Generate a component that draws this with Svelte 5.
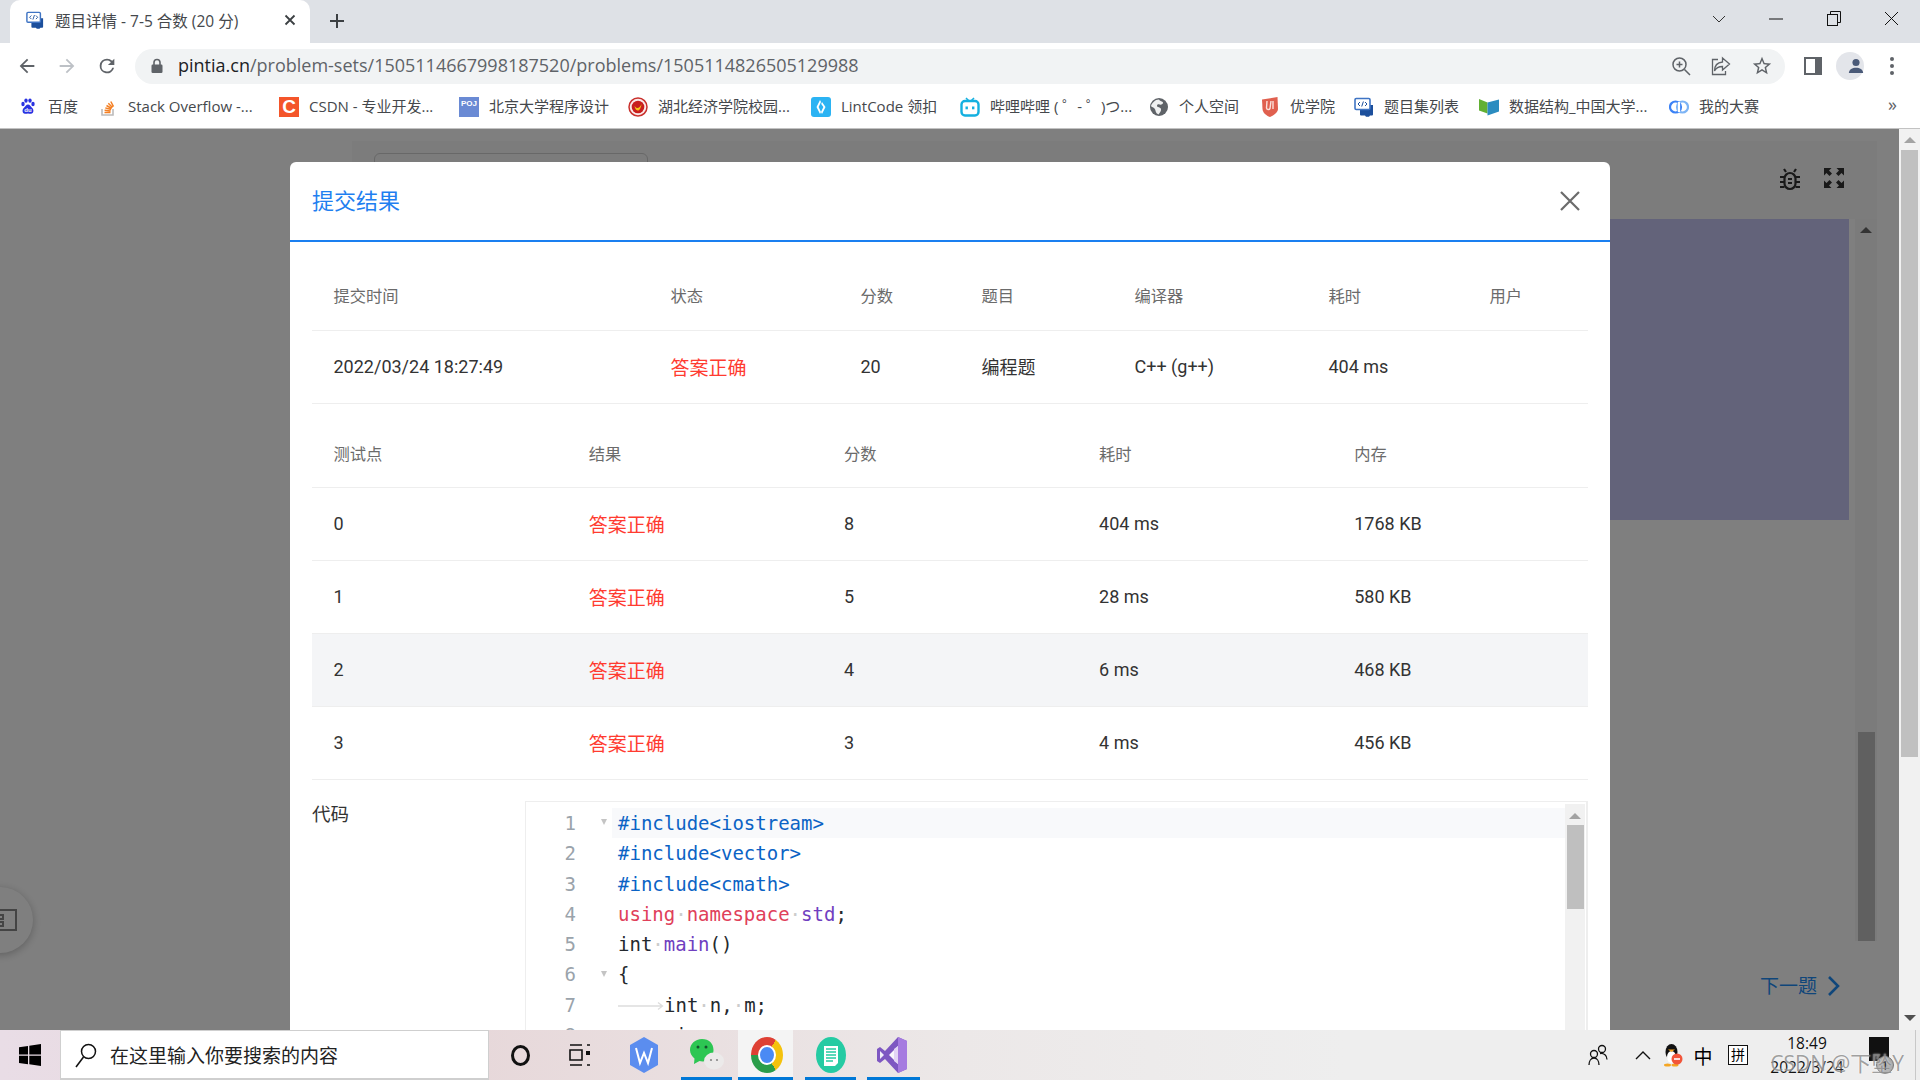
<script>
  // w = width of the bookmark label, taken from the bar in the screenshot
  const bookmarks = [
    { icon: "baidu", label: "百度", w: 30 },
    { icon: "so", label: "Stack Overflow -...", w: 131 },
    { icon: "csdn", label: "CSDN - 专业开发...", w: 130 },
    { icon: "poj", label: "北京大学程序设计", w: 119 },
    { icon: "hbue", label: "湖北经济学院校园...", w: 133 },
    { icon: "lint", label: "LintCode 领扣", w: 99 },
    { icon: "bili", label: "哔哩哔哩 ( ゜- ゜)つ...", w: 139 },
    { icon: "globe", label: "个人空间", w: 61 },
    { icon: "yxy", label: "优学院", w: 44 },
    { icon: "pta", label: "题目集列表", w: 75 },
    { icon: "mooc", label: "数据结构_中国大学...", w: 140 },
    { icon: "match", label: "我的大赛", w: 60 },
  ];

  const summary = {
    time: "2022/03/24 18:27:49",
    status: "答案正确",
    score: "20",
    problem: "编程题",
    compiler: "C++ (g++)",
    cost: "404 ms",
  };

  const points = [
    { id: 0, score: 8, time: "404 ms", mem: "1768 KB" },
    { id: 1, score: 5, time: "28 ms", mem: "580 KB" },
    { id: 2, score: 4, time: "6 ms", mem: "468 KB", hover: true },
    { id: 3, score: 3, time: "4 ms", mem: "456 KB" },
  ];
</script>

{#snippet pta(size)}
  <svg width={size} height={size} viewBox="0 0 20 20">
    <path d="M6 8h13v9.5a1 1 0 0 1-1 1h-2l-1 1.2h-3l-1-1.2H7a1 1 0 0 1-1-1z" fill="#1c4f9c" />
    <rect x="1" y="1.5" width="15" height="11" rx="1.2" fill="#fff" stroke="#3f74c4" stroke-width="1.6" />
    <path d="M6 5l-2 2 2 2M11 5l2 2-2 2M9.4 4.5 7.7 9.5" fill="none" stroke="#1c4f9c" stroke-width="1" />
  </svg>
{/snippet}

{#snippet bmIcon(name)}
  {#if name === "baidu"}
    <svg width="16" height="20" viewBox="0 0 16 20" fill="#2932e1">
      <ellipse cx="3" cy="7" rx="1.7" ry="2.2" /><ellipse cx="6" cy="3.6" rx="1.7" ry="2.2" />
      <ellipse cx="10" cy="3.6" rx="1.7" ry="2.2" /><ellipse cx="13" cy="7" rx="1.7" ry="2.2" />
      <path d="M8 7.5c-2 0-2.6 2.2-4.2 3.4C2 12.200 2 16.500 5 16.800c1.200.1 2-.4 3-.4s1.800.5 3 .4c3-.3 3-4.600 1.200-5.900C10.600 9.700 10 7.500 8 7.500z" />
      <text x="8" y="15.400" font-size="6" text-anchor="middle" fill="#fff" font-family="Liberation Sans" font-weight="700">du</text>
    </svg>
  {:else if name === "so"}
    <svg width="16" height="20" viewBox="0 0 16 20">
      <path d="M2 12v6h11v-6" fill="none" stroke="#bcbbbb" stroke-width="1.600" />
      <path d="M4.500 15.500h6M4.600 13.300l6 .6M5.300 10.900l5.800 1.600M6.500 8.500l5.200 3M8.300 6.300l4.200 4.300M10.800 4.500l2.700 5.200" fill="none" stroke="#f48024" stroke-width="1.500" />
    </svg>
  {:else if name === "csdn"}
    <span class="sq csdn">C</span>
  {:else if name === "poj"}
    <span class="sq poj">POJ</span>
  {:else if name === "hbue"}
    <svg width="20" height="20" viewBox="0 0 20 20">
      <circle cx="10" cy="10" r="9" fill="#fbeaea" stroke="#c9302c" stroke-width="1.500" />
      <circle cx="10" cy="10" r="6.300" fill="#c81e1e" />
      <path d="M6.500 9c2 3 5 3 7-2-.5 4-2 6.500-3.500 6.500S7 12 6.500 9z" fill="#f5c518" />
    </svg>
  {:else if name === "lint"}
    <svg width="20" height="20" viewBox="0 0 20 20">
      <rect width="20" height="20" rx="3" fill="#2bb3f3" />
      <path d="M9 3 5.500 10 9 17l1-2-2.400-5L10 5zM11 5l-.8 2 2.200 3-2.400 5 1 2 3.500-7z" fill="#fff" />
    </svg>
  {:else if name === "bili"}
    <svg width="20" height="20" viewBox="0 0 20 20">
      <path d="M6 1l3 3M14 1l-3 3" stroke="#14b0e0" stroke-width="1.600" />
      <rect x="1.500" y="4" width="17" height="14.500" rx="3.500" fill="none" stroke="#14b0e0" stroke-width="2.400" />
      <rect x="5.500" y="9.500" width="2.400" height="2.800" fill="#14b0e0" /><rect x="12" y="9.500" width="2.400" height="2.800" fill="#14b0e0" />
    </svg>
  {:else if name === "globe"}
    <svg width="18" height="18" viewBox="0 0 18 18">
      <circle cx="9" cy="9" r="9" fill="#5f6368" />
      <path d="M9 1.500c1 2 3.500 1.500 4 3s-2 2.500-3.500 2S7 6.500 7 8s3.500 1 4 3-1.500 4-2.500 5.500C5 15 6 12 4.500 10.500S1 9 1 8c1-3 4-6.500 8-6.500z" fill="#fff" opacity=".9" />
    </svg>
  {:else if name === "yxy"}
    <svg width="20" height="22" viewBox="0 0 20 22">
      <path d="M2 3.500 17.500 1 18 13c0 3-4 6.500-8 8-4-1.500-7-4-7.500-8z" fill="#e0604f" />
      <path d="M7 5l-.5 7c0 2 3 2 3.500.5L11 5M13 5v8" fill="none" stroke="#fbe0da" stroke-width="1.400" />
    </svg>
  {:else if name === "pta"}
    {@render pta(20)}
  {:else if name === "mooc"}
    <svg width="20" height="20" viewBox="0 0 20 20">
      <path d="M0 2l8.500 3.500v11L0 13.500z" fill="#62b033" />
      <path d="M8.500 5.500 20 2.500v12l-11.500 4z" fill="#2b8cc0" />
    </svg>
  {:else if name === "match"}
    <svg width="20" height="20" viewBox="0 0 20 20" fill="none" stroke-width="2.200">
      <circle cx="6.500" cy="10" r="5.500" stroke="#3b82f6" />
      <circle cx="13.500" cy="10" r="5.500" stroke="#7db4f5" />
      <path d="M10 5v10" stroke="#fff" />
    </svg>
  {/if}
{/snippet}

<div class="screen">
  <div class="tabstrip">
    <div class="tab">
      {@render pta(18)}
      <span class="tab-title">题目详情 - 7-5 合数 (20 分)</span>
      <svg class="tab-x" width="12" height="12" viewBox="0 0 12 12"><path d="M1.500 1.500l9 9M10.500 1.500l-9 9" stroke="#3c4043" stroke-width="1.800" /></svg>
    </div>
    <svg class="newtab" width="16" height="16" viewBox="0 0 16 16"><path d="M8 1v14M1 8h14" stroke="#3c4043" stroke-width="2" /></svg>
    <div class="winctl">
      <svg width="14" height="10" viewBox="0 0 14 10"><path d="M1 2l6 6 6-6" fill="none" stroke="#333" /></svg>
      <svg width="14" height="2" viewBox="0 0 14 2"><path d="M0 1h14" stroke="#111" /></svg>
      <svg width="14" height="16" viewBox="0 0 14 16"><rect x=".5" y="3.500" width="10" height="11" fill="none" stroke="#111" /><path d="M3.500 3V.5h10v11H11" fill="none" stroke="#111" /></svg>
      <svg width="15" height="15" viewBox="0 0 15 15"><path d="M1 1l13 13M14 1L1 14" stroke="#111" /></svg>
    </div>
  </div>

  <div class="toolbar">
    <div class="nav">
      <svg width="22" height="22" viewBox="0 0 24 24"><path d="M20 11H7.800l5.600-5.600L12 4l-8 8 8 8 1.400-1.400L7.800 13H20z" fill="#5f6368" /></svg>
      <svg width="22" height="22" viewBox="0 0 24 24"><path d="M4 11h12.200l-5.600-5.600L12 4l8 8-8 8-1.400-1.400 5.600-5.600H4z" fill="#bdc1c6" /></svg>
      <svg width="22" height="22" viewBox="0 0 24 24"><path d="M17.650 6.350A7.960 7.960 0 0 0 12 4a8 8 0 1 0 7.750 10h-2.080A6 6 0 1 1 12 6c1.660 0 3.140.69 4.220 1.780L13 11h7V4z" fill="#5f6368" /></svg>
    </div>
    <div class="omnibox">
      <svg width="14" height="16" viewBox="0 0 14 16"><path d="M4 7V4.500a3 3 0 0 1 6 0V7" fill="none" stroke="#5f6368" stroke-width="1.600" /><rect x="1.500" y="6.500" width="11" height="8.500" rx="1.200" fill="#5f6368" /></svg>
      <span class="url"><span class="host">pintia.cn</span>/problem-sets/1505114667998187520/problems/1505114826505129988</span>
      <div class="omni-icons">
        <svg width="20" height="20" viewBox="0 0 20 20" fill="none" stroke="#5f6368" stroke-width="1.500"><circle cx="8.500" cy="8.500" r="6.500" /><path d="M13.500 13.500 19 19M5.500 8.500h6M8.500 5.500v6" /></svg>
        <svg width="20" height="20" viewBox="0 0 20 20" fill="none" stroke="#5f6368" stroke-width="1.300"><path d="M11.500 2l7 6-7 6v-3.500C7.500 10.500 5 12 3.500 15c0-5 3-8.500 8-9z" /><path d="M7 3.500H1.500v15h13V15" /></svg>
        <svg width="22" height="22" viewBox="0 0 24 24"><path d="M22 9.240l-7.190-.62L12 2 9.190 8.630 2 9.240l5.460 4.730L5.820 21 12 17.270 18.180 21l-1.630-7.030L22 9.240zM12 15.400l-3.760 2.270 1-4.280-3.320-2.880 4.380-.38L12 6.100l1.710 4.040 4.380.38-3.320 2.880 1 4.280L12 15.400z" fill="#5f6368" /></svg>
      </div>
    </div>
    <div class="tool-right">
      <svg width="18" height="18" viewBox="0 0 18 18"><rect width="18" height="18" fill="#5f6368" /><rect x="2" y="2" width="9" height="14" fill="#fff" /></svg>
      <span class="avatar"><svg width="18" height="18" viewBox="0 0 18 18" fill="#4a5a78"><circle cx="9" cy="5" r="4" /><path d="M1 17c0-4 4-6 8-6s8 2 8 6z" /></svg></span>
      <svg width="4" height="18" viewBox="0 0 4 18" fill="#5f6368"><circle cx="2" cy="2" r="2" /><circle cx="2" cy="9" r="2" /><circle cx="2" cy="16" r="2" /></svg>
    </div>
  </div>

  <div class="bookmarks">
    {#each bookmarks as b}
      <div class="bm">
        <span class="bm-icon">{@render bmIcon(b.icon)}</span>
        <span class="bm-label" style="width: {b.w}px">{b.label}</span>
      </div>
    {/each}
    <span class="more">»</span>
  </div>

  <div class="viewport">
    <div class="page">
      <div class="panel">
        <div class="panel-head">
          <div class="ghost-input"></div>
          <div class="panel-tools">
            <svg width="22" height="24" viewBox="0 0 22 24" fill="none" stroke="#333" stroke-width="2.200"><rect x="5.500" y="5" width="11" height="16" rx="5.500" /><path d="M7 4 5 1M15 4l2-3M5.500 9H1M5.500 14H1M5.500 19H1M16.500 9H21M16.500 14H21M16.500 19H21M9 11h4M9 15h4" /></svg>
            <svg width="20" height="20" viewBox="0 0 20 20" fill="#333"><path d="M0 0h7.500L5 2.500l3 3L5.500 8l-3-3L0 7.500zM20 0v7.500L17.500 5l-3 3L12 5.500l3-3L12.500 0zM0 20v-7.500L2.500 15l3-3L8 14.500l-3 3L7.500 20zM20 20h-7.500l2.500-2.500-3-3 2.500-2.500 3 3 2.500-2.500z" /></svg>
          </div>
        </div>
        <div class="panel-body">
          <div class="panel-main"><div class="lilac"></div></div>
          <div class="inner-bar">
            <span class="arrow-up dark"></span>
            <div class="inner-thumb"></div>
          </div>
        </div>
      </div>
      <div class="pager">
        <span>下一题</span>
        <svg width="14" height="22" viewBox="0 0 14 22"><path d="M2 2l9 9-9 9" fill="none" stroke="currentColor" stroke-width="2.600" /></svg>
      </div>
      <div class="float-btn">
        <svg width="17" height="22" viewBox="0 0 17 22" fill="none" stroke="#fff" stroke-width="2"><path d="M0 1h16v20H0" /><path d="M0 6h3v4H0M0 13h3v4H0" /></svg>
      </div>
      <div class="dim"></div>
    </div>

    <div class="page-bar">
      <span class="arrow-up"></span>
      <div class="page-thumb"></div>
      <span class="arrow-down"></span>
    </div>

    <div class="modal">
      <header class="modal-head">
        <h2>提交结果</h2>
        <svg width="20" height="20" viewBox="0 0 20 20"><path d="M1 1l18 18M19 1 1 19" stroke="#6b6b6b" stroke-width="2.200" /></svg>
      </header>
      <div class="modal-body">
        <table class="t1">
          <colgroup><col /><col /><col /><col /><col /><col /><col /></colgroup>
          <thead>
            <tr><th>提交时间</th><th>状态</th><th>分数</th><th>题目</th><th>编译器</th><th>耗时</th><th>用户</th></tr>
          </thead>
          <tbody>
            <tr>
              <td>{summary.time}</td>
              <td class="ok">{summary.status}</td>
              <td>{summary.score}</td>
              <td>{summary.problem}</td>
              <td>{summary.compiler}</td>
              <td>{summary.cost}</td>
              <td></td>
            </tr>
          </tbody>
        </table>

        <table class="t2">
          <thead>
            <tr><th>测试点</th><th>结果</th><th>分数</th><th>耗时</th><th>内存</th></tr>
          </thead>
          <tbody>
            {#each points as p}
              <tr class:hover={p.hover}>
                <td>{p.id}</td>
                <td class="ok">答案正确</td>
                <td>{p.score}</td>
                <td>{p.time}</td>
                <td>{p.mem}</td>
              </tr>
            {/each}
          </tbody>
        </table>

        <div class="code-row">
          <div class="code-label">代码</div>
          <div class="editor">
            <div class="lines">
              <div class="line active"><span class="num">1</span><span class="fold"><span class="tri"></span></span><span class="src"><b class="inc">#include&lt;iostream&gt;</b></span></div>
              <div class="line"><span class="num">2</span><span class="fold"></span><span class="src"><b class="inc">#include&lt;vector&gt;</b></span></div>
              <div class="line"><span class="num">3</span><span class="fold"></span><span class="src"><b class="inc">#include&lt;cmath&gt;</b></span></div>
              <div class="line"><span class="num">4</span><span class="fold"></span><span class="src"><b class="kw">using</b><i>·</i><b class="kw">namespace</b><i>·</i><b class="fn">std</b>;</span></div>
              <div class="line"><span class="num">5</span><span class="fold"></span><span class="src">int<i>·</i><b class="fn">main</b>()</span></div>
              <div class="line"><span class="num">6</span><span class="fold"><span class="tri"></span></span><span class="src">{"{"}</span></div>
              <div class="line"><span class="num">7</span><span class="fold"></span><span class="src"><svg class="tabmark" width="46" height="10" viewBox="0 0 46 10"><path d="M0 5h44M40 1.500 44.500 5 40 8.500" fill="none" stroke="#ddd" stroke-width="1.300" /></svg>int<i>·</i>n,<i>·</i>m;</span></div>
              <div class="line"><span class="num">8</span><span class="fold"></span><span class="src"><svg class="tabmark" width="46" height="10" viewBox="0 0 46 10"><path d="M0 5h44M40 1.500 44.500 5 40 8.500" fill="none" stroke="#ddd" stroke-width="1.300" /></svg>cin&gt;&gt;n&gt;&gt;m;</span></div>
            </div>
            <div class="code-bar">
              <span class="arrow-up"></span>
              <div class="code-thumb"></div>
            </div>
          </div>
        </div>
      </div>
    </div>
  </div>

  <div class="taskbar">
    <div class="start">
      <svg width="22" height="22" viewBox="0 0 22 22" fill="#000"><path d="M0 3.200 9 2v8.500H0zM10.300 1.800 22 0v10.500H10.300zM0 11.800h9v8.400L0 19zM10.300 11.800H22V22l-11.700-1.700z" /></svg>
    </div>
    <div class="search">
      <svg width="24" height="26" viewBox="0 0 24 26" fill="none" stroke="#111" stroke-width="1.500"><circle cx="14.500" cy="9.500" r="7" /><path d="M9.500 15 2 25" /></svg>
      <span>在这里输入你要搜索的内容</span>
    </div>
    <div class="tile w62"><span class="ring"></span></div>
    <div class="tile w58">
      <svg width="22" height="26" viewBox="0 0 22 26" fill="none" stroke="#111" stroke-width="1.600"><path d="M1 3h12M1 23h12M1 8h12v10H1zM18 3h3M18 23h3" /><rect x="17" y="9" width="4" height="4" fill="#111" stroke="none" /></svg>
    </div>
    <div class="tile w70">
      <svg width="30" height="36" viewBox="0 0 30 36"><path d="M15 0l14 8v20l-14 8-14-8V8z" fill="#5b8def" /><path d="M7 11l4 15 4-10 4 10 4-15" fill="none" stroke="#fff" stroke-width="2" /></svg>
    </div>
    <div class="tile run w51 m2">
      <svg width="36" height="34" viewBox="0 0 36 34"><path d="M13 1C6 1 1 6 1 12c0 3.500 2 6.500 4.500 8.500L5 26l5.500-3c1 .3 2 .4 3 .4 7 0 11-5 11-11.400S20 1 13 1z" fill="#2dc653" /><ellipse cx="25" cy="23" rx="10" ry="8.500" fill="#eceaea" /><circle cx="9" cy="9" r="1.500" fill="#14532d" /><circle cx="17" cy="9" r="1.500" fill="#14532d" /><circle cx="22" cy="22" r="1.100" fill="#888" /><circle cx="28" cy="22" r="1.100" fill="#888" /></svg>
    </div>
    <div class="tile run w55 m6 lit"><span class="chrome"><span></span></span></div>
    <div class="tile run w51 m12">
      <svg width="30" height="36" viewBox="0 0 30 36"><ellipse cx="15" cy="18" rx="15" ry="18" fill="#25cba3" /><path d="M8 9h14v17l-3 3H8z" fill="#fff" /><path d="M10 12h10M10 15h10M10 18h10M10 21h10M10 24h7" stroke="#25cba3" stroke-width="1.400" /></svg>
    </div>
    <div class="tile run w53 m11 vs">
      <svg width="30" height="36" viewBox="0 0 30 36"><path d="M21 0l9 4v28l-9 4L8 22l-5 4-3-2V12l3-2 5 4z" fill="#7e57c2" /><path d="M21 9v18l-9-9z" fill="#fff" opacity=".95" /><path d="M3 14v8l4-4z" fill="#fff" opacity=".9" /><path d="M21 0l9 4v28l-9 4z" fill="#a67be0" /><path d="M21 9v18l-4-3V12z" fill="#e3d5f5" /></svg>
    </div>

    <div class="tray">
      <div class="t30">
        <svg width="20" height="22" viewBox="0 0 20 22" fill="none" stroke="#111" stroke-width="1.300"><circle cx="14" cy="5" r="3.500" /><circle cx="6" cy="10" r="3.500" /><path d="M1 21c0-4 2-7 5-7s5 3 5 7M12 9.500c4-.5 7 2 7 6" /></svg>
      </div>
      <div class="t30 mchev"><svg width="16" height="10" viewBox="0 0 16 10"><path d="M1 9l7-7 7 7" fill="none" stroke="#111" stroke-width="1.400" /></svg></div>
      <div class="t30">
        <svg width="20" height="24" viewBox="0 0 20 24"><ellipse cx="8.500" cy="9" rx="6" ry="8" fill="#111" /><ellipse cx="8.500" cy="14" rx="4.500" ry="6" fill="#fff" /><path d="M5 6.500h7l-3.500 2.500z" fill="#f5a623" /><ellipse cx="4.500" cy="22" rx="3.500" ry="1.500" fill="#f5a623" /><ellipse cx="12" cy="22" rx="3.500" ry="1.500" fill="#f5a623" /><circle cx="14" cy="16" r="5.500" fill="#f2553a" /><path d="M11 16h6" stroke="#fff" stroke-width="1.600" /></svg>
      </div>
      <div class="t30 ime">中</div>
      <div class="t30 mpin"><span class="pin">拼</span></div>
      <div class="clock"><span>18:49</span><span>2022/3/24</span></div>
      <div class="t30 notify"><span class="note"></span><span class="badge">1</span></div>
      <div class="desk-line"></div>
    </div>
    <div class="watermark">CSDN @下坠Y</div>
  </div>
</div>

<style>
  :global(body) {
    margin: 0;
    overflow: hidden;
  }

  .screen {
    width: 1920px;
    height: 1080px;
    display: flex;
    flex-direction: column;
    overflow: hidden;
    font-family: "Open Sans", "Noto Sans CJK SC", sans-serif;
    background: #fff;
  }

  /* browser chrome */
  .tabstrip {
    height: 43px;
    flex: none;
    background: #dee1e6;
    display: flex;
    align-items: center;
    padding-left: 10px;
    box-sizing: border-box;
  }
  .tab {
    width: 300px;
    height: 43px;
    box-sizing: border-box;
    background: #fff;
    border-radius: 10px 10px 0 0;
    display: flex;
    align-items: center;
    padding: 0 14px 3px 16px;
    gap: 11px;
  }
  .tab-title {
    flex: 1;
    font-size: 15.5px;
    color: #45484c;
    white-space: nowrap;
  }
  .newtab {
    margin-left: 19px;
    margin-bottom: 2px;
  }
  .winctl {
    margin-left: auto;
    display: grid;
    grid-template-columns: repeat(4, 57.3px);
    justify-items: center;
    align-items: center;
    margin-bottom: 6px;
    width: 229px;
    margin-right: 0.5px;
  }

  .toolbar {
    height: 42px;
    flex: none;
    display: flex;
    align-items: center;
    padding-top: 4px;
    box-sizing: border-box;
    background: #fff;
  }
  .nav {
    width: 135px;
    flex: none;
    box-sizing: border-box;
    padding: 0 17px 0 16px;
    display: flex;
    justify-content: space-between;
  }
  .omnibox {
    width: 1650px;
    height: 35px;
    flex: none;
    box-sizing: border-box;
    background: #f1f3f4;
    border-radius: 18px;
    display: flex;
    align-items: center;
    padding: 0 12px 0 15px;
  }
  .url {
    margin-left: 14px;
    padding-bottom: 2px;
    font-size: 18px;
    color: #5f6368;
    white-space: nowrap;
  }
  .host {
    color: #202124;
  }
  .omni-icons {
    margin-left: auto;
    display: flex;
    align-items: center;
    gap: 20px;
  }
  .tool-right {
    flex: 1;
    display: flex;
    align-items: center;
    padding-left: 19px;
    gap: 14px;
  }
  .avatar {
    width: 28px;
    height: 28px;
    border-radius: 50%;
    background: #e3e5ea;
    display: flex;
    align-items: center;
    justify-content: center;
  }
  .tool-right svg:last-child {
    margin-left: 12px;
  }

  .bookmarks {
    height: 44px;
    flex: none;
    box-sizing: border-box;
    border-bottom: 1px solid #c2c2c2;
    display: flex;
    align-items: center;
    padding-left: 18px;
    gap: 20px;
    background: #fff;
  }
  .bm {
    display: flex;
    align-items: center;
    gap: 10px;
    font-size: 15px;
    color: #45484c;
    white-space: nowrap;
  }
  .bm-icon {
    width: 20px;
    height: 22px;
    flex: none;
    display: flex;
    align-items: center;
    justify-content: center;
  }
  .bm-label {
    display: block;
    padding-bottom: 2px;
  }
  .sq {
    width: 20px;
    height: 20px;
    flex: none;
    display: flex;
    align-items: center;
    justify-content: center;
    color: #fff;
    font-family: "Liberation Sans", sans-serif;
    font-weight: 700;
  }
  .csdn {
    background: #f4552a;
    font-size: 19px;
  }
  .poj {
    background: #6a8ad4;
    font-size: 8px;
    padding-bottom: 7px;
    box-sizing: border-box;
  }
  .more {
    margin-left: auto;
    margin-right: 23px;
    font-size: 18px;
    color: #5f6368;
    line-height: 1;
    padding-bottom: 6px;
  }

  /* page behind the modal */
  .viewport {
    flex: 1;
    min-height: 0;
    position: relative;
    display: flex;
    overflow: hidden;
  }
  .page {
    flex: 1;
    position: relative;
    background: #fff;
    box-sizing: border-box;
    padding: 12px 22px 0 352px;
    overflow: hidden;
  }
  .dim {
    position: absolute;
    inset: 0;
    background: rgba(0, 0, 0, 0.5);
  }
  .panel {
    height: 800px;
    display: flex;
    flex-direction: column;
    background: #f8f8f8;
  }
  .panel-head {
    height: 78px;
    flex: none;
    display: flex;
    justify-content: space-between;
    padding: 12px 33px 0 22px;
    box-sizing: border-box;
  }
  .ghost-input {
    width: 274px;
    height: 60px;
    border: 1px solid #d0d0d0;
    border-radius: 6px;
    box-sizing: border-box;
    background: #f8f8f8;
  }
  .panel-tools {
    display: flex;
    align-items: flex-start;
    gap: 23px;
    padding-top: 15px;
  }
  .panel-body {
    flex: 1;
    display: flex;
    background: #fff;
  }
  .panel-main {
    flex: 1;
    padding-right: 6px;
  }
  .lilac {
    height: 301px;
    background: #c6c6f4;
  }
  .inner-bar {
    width: 22px;
    background: #f6f6f6;
    display: flex;
    flex-direction: column;
    align-items: center;
    box-sizing: border-box;
    padding-top: 8px;
  }
  .inner-thumb {
    width: 17px;
    height: 209px;
    margin-top: auto;
    background: #c0c0c0;
  }
  .pager {
    display: flex;
    align-items: center;
    justify-content: flex-end;
    gap: 10px;
    padding: 32px 0 0;
    margin-right: 36px;
    color: #1f8cf5;
    font-size: 19px;
    line-height: 26px;
  }
  .float-btn {
    position: absolute;
    left: -33px;
    top: 758px;
    width: 66px;
    height: 66px;
    border-radius: 50%;
    background: #fff;
    box-shadow: 0 2px 8px rgba(0, 0, 0, 0.25);
    display: flex;
    align-items: center;
    justify-content: flex-end;
    padding-right: 16px;
    box-sizing: border-box;
  }
  .float-btn path {
    stroke: #888;
  }

  .arrow-up,
  .arrow-down {
    width: 0;
    height: 0;
    border-left: 6px solid transparent;
    border-right: 6px solid transparent;
  }
  .arrow-up {
    border-bottom: 6px solid #a3a3a3;
  }
  .arrow-up.dark {
    border-bottom-color: #666;
  }
  .arrow-down {
    border-top: 6px solid #505050;
  }

  .page-bar {
    width: 21px;
    flex: none;
    background: #f1f1f1;
    display: flex;
    flex-direction: column;
    align-items: center;
    box-sizing: border-box;
    padding: 8px 0 9px 0;
  }
  .page-thumb {
    width: 17px;
    height: 607px;
    margin-top: 7px;
    margin-bottom: auto;
    background: #c0c0c0;
  }

  /* modal */
  .modal {
    position: absolute;
    left: 290px;
    top: 33px;
    width: 1320px;
    height: 1000px;
    background: #fff;
    border-radius: 6px 6px 0 0;
    font-family: Roboto, "Noto Sans CJK SC", sans-serif;
  }
  .modal-head {
    height: 80px;
    box-sizing: border-box;
    border-bottom: 2px solid #1a7ff0;
    display: flex;
    align-items: center;
    justify-content: space-between;
    padding: 0 30px 0 22px;
  }
  h2 {
    margin: 0 0 4px;
    font-size: 22px;
    font-weight: 400;
    color: #1f7ff0;
  }
  .modal-body {
    padding: 20px 22px 0;
  }
  table {
    width: 100%;
    table-layout: fixed;
    border-collapse: separate;
    border-spacing: 0;
  }
  th,
  td {
    box-sizing: border-box;
    padding: 0 0 2px 21.5px;
    text-align: left;
    border-bottom: 1px solid #eee;
    white-space: nowrap;
  }
  th {
    height: 68px;
    font-size: 16.3px;
    font-weight: 400;
    color: #6b6b6b;
  }
  td {
    height: 73px;
    font-size: 18px;
    color: #333;
  }
  .t1 th {
    height: 69px;
  }
  .t1 col:nth-child(1) { width: 337px; }
  .t1 col:nth-child(2) { width: 190px; }
  .t1 col:nth-child(3) { width: 121px; }
  .t1 col:nth-child(4) { width: 153px; }
  .t1 col:nth-child(5) { width: 194px; }
  .t1 col:nth-child(6) { width: 161px; }
  .t2 {
    margin-top: 16px;
  }
  td.ok {
    font-size: 19px;
    color: #ff3b30;
  }
  .hover td {
    background: #f4f5f7;
  }

  .code-row {
    display: flex;
    margin-top: 21px;
  }
  .code-label {
    width: 213px;
    flex: none;
    font-size: 18.5px;
    color: #333;
    line-height: 28px;
  }
  .editor {
    flex: 1;
    height: 300px;
    box-sizing: border-box;
    border: 1px solid #eee;
    border-right-width: 2px;
    display: flex;
    padding-top: 6px;
  }
  .lines {
    flex: 1;
    font-family: "DejaVu Sans Mono", monospace;
    font-size: 19px;
    color: #24292e;
  }
  .line {
    height: 30.3px;
    line-height: 30.3px;
    display: flex;
    white-space: pre;
  }
  .num {
    width: 50px;
    text-align: right;
    color: #9aa3ab;
    flex: none;
  }
  .fold {
    width: 36px;
    flex: none;
    display: flex;
    justify-content: flex-end;
    align-items: center;
    box-sizing: border-box;
    padding: 0 5px 2px 0;
  }
  .tri {
    width: 0;
    height: 0;
    border-left: 3.5px solid transparent;
    border-right: 3.5px solid transparent;
    border-top: 6px solid #c4c4c4;
  }
  .src {
    flex: 1;
    padding-left: 6px;
  }
  .active .src {
    background: #f8f9fb;
  }
  .src b {
    font-weight: 400;
  }
  .src i {
    font-style: normal;
    color: #ccc;
  }
  .inc { color: #0b63c5; }
  .kw { color: #e0405a; }
  .fn { color: #7040c0; }
  .tabmark {
    vertical-align: 1px;
  }
  .code-bar {
    width: 20px;
    flex: none;
    margin: -4px 1px 0 0;
    background: #f1f1f1;
    display: flex;
    flex-direction: column;
    align-items: center;
    padding-top: 9px;
    box-sizing: border-box;
  }
  .code-thumb {
    width: 17px;
    height: 84px;
    margin-top: 6px;
    background: #bfbfbf;
  }

  /* windows taskbar */
  .taskbar {
    height: 50px;
    flex: none;
    position: relative;
    z-index: 1;
    display: flex;
    background: linear-gradient(90deg, #e9dde6 0, #e7d8da 25%, #ece8e8 50%, #eeeeee 70%, #eeeeee 100%);
  }
  .start {
    width: 60px;
    flex: none;
    display: flex;
    align-items: center;
    justify-content: center;
  }
  .search {
    width: 429px;
    flex: none;
    box-sizing: border-box;
    background: #fff;
    border: 1px solid #cfcfcf;
    border-width: 1px 1px 2px;
    display: flex;
    align-items: center;
    padding-left: 13px;
    gap: 12px;
    font-family: "Noto Sans CJK SC", sans-serif;
    font-size: 19px;
    color: #222;
  }
  .tile {
    flex: none;
    display: flex;
    align-items: center;
    justify-content: center;
    box-sizing: border-box;
  }
  .run {
    border-bottom: 3px solid #0078d7;
    padding-top: 3px;
  }
  .lit {
    background: #f4f4f4;
    padding-left: 2px;
  }
  .vs {
    padding-right: 4px;
  }
  .w62 { width: 62px; }
  .w58 { width: 58px; }
  .w70 { width: 70px; }
  .w51 { width: 51px; }
  .w55 { width: 55px; }
  .w53 { width: 53px; }
  .m2 { margin-left: 2px; }
  .m6 { margin-left: 6px; }
  .m11 { margin-left: 11px; }
  .m12 { margin-left: 12px; }
  .ring {
    width: 19px;
    height: 21px;
    border: 3.5px solid #111;
    border-radius: 50%;
    box-sizing: border-box;
  }
  .chrome {
    width: 32px;
    height: 36px;
    border-radius: 50%;
    background: conic-gradient(from 30deg, #f4c20d 0 120deg, #2a9d4a 120deg 240deg, #de4034 240deg 360deg);
    display: flex;
    align-items: center;
    justify-content: center;
  }
  .chrome span {
    width: 14px;
    height: 16px;
    border-radius: 50%;
    background: #4a8af4;
    border: 2.500px solid #fff;
  }
  .tray {
    margin-left: auto;
    display: flex;
    align-items: center;
    height: 100%;
  }
  .t30 {
    width: 30px;
    display: flex;
    align-items: center;
    justify-content: center;
  }
  .mchev {
    margin-left: 15px;
  }
  .mpin {
    margin-left: 5px;
  }
  .ime {
    font-family: "Noto Sans CJK SC", sans-serif;
    font-size: 19px;
    color: #000;
  }
  .pin {
    width: 20px;
    height: 20px;
    border: 1px solid #111;
    box-sizing: border-box;
    background: #fff;
    font-family: "Noto Sans CJK SC", sans-serif;
    font-size: 14px;
    line-height: 17px;
    text-align: center;
    color: #000;
  }
  .clock {
    width: 94px;
    margin-left: 7px;
    display: flex;
    flex-direction: column;
    align-items: center;
    font-size: 15.5px;
    line-height: 24px;
    color: #111;
    font-family: "Open Sans", sans-serif;
  }
  .notify {
    margin-left: 10px;
    position: relative;
    height: 100%;
  }
  .note {
    width: 20px;
    height: 24px;
    margin-bottom: 12px;
    background: #111;
  }
  .badge {
    position: absolute;
    right: 0;
    top: 26px;
    width: 18px;
    height: 18px;
    border-radius: 50%;
    background: #aaa;
    border: 1px solid #777;
    box-sizing: border-box;
    font-size: 13px;
    line-height: 16px;
    text-align: center;
    color: #111;
  }
  .desk-line {
    width: 1px;
    height: 100%;
    margin-left: 21px;
    margin-right: 4px;
    background: #c8c8c8;
  }
  .watermark {
    position: absolute;
    right: 16px;
    top: 17px;
    font-family: "Open Sans", "Noto Sans CJK SC", sans-serif;
    font-size: 21px;
    color: rgba(120, 120, 120, 0.7);
    text-shadow: 0 0 2px rgba(255, 255, 255, 0.8);
    white-space: nowrap;
  }
</style>
